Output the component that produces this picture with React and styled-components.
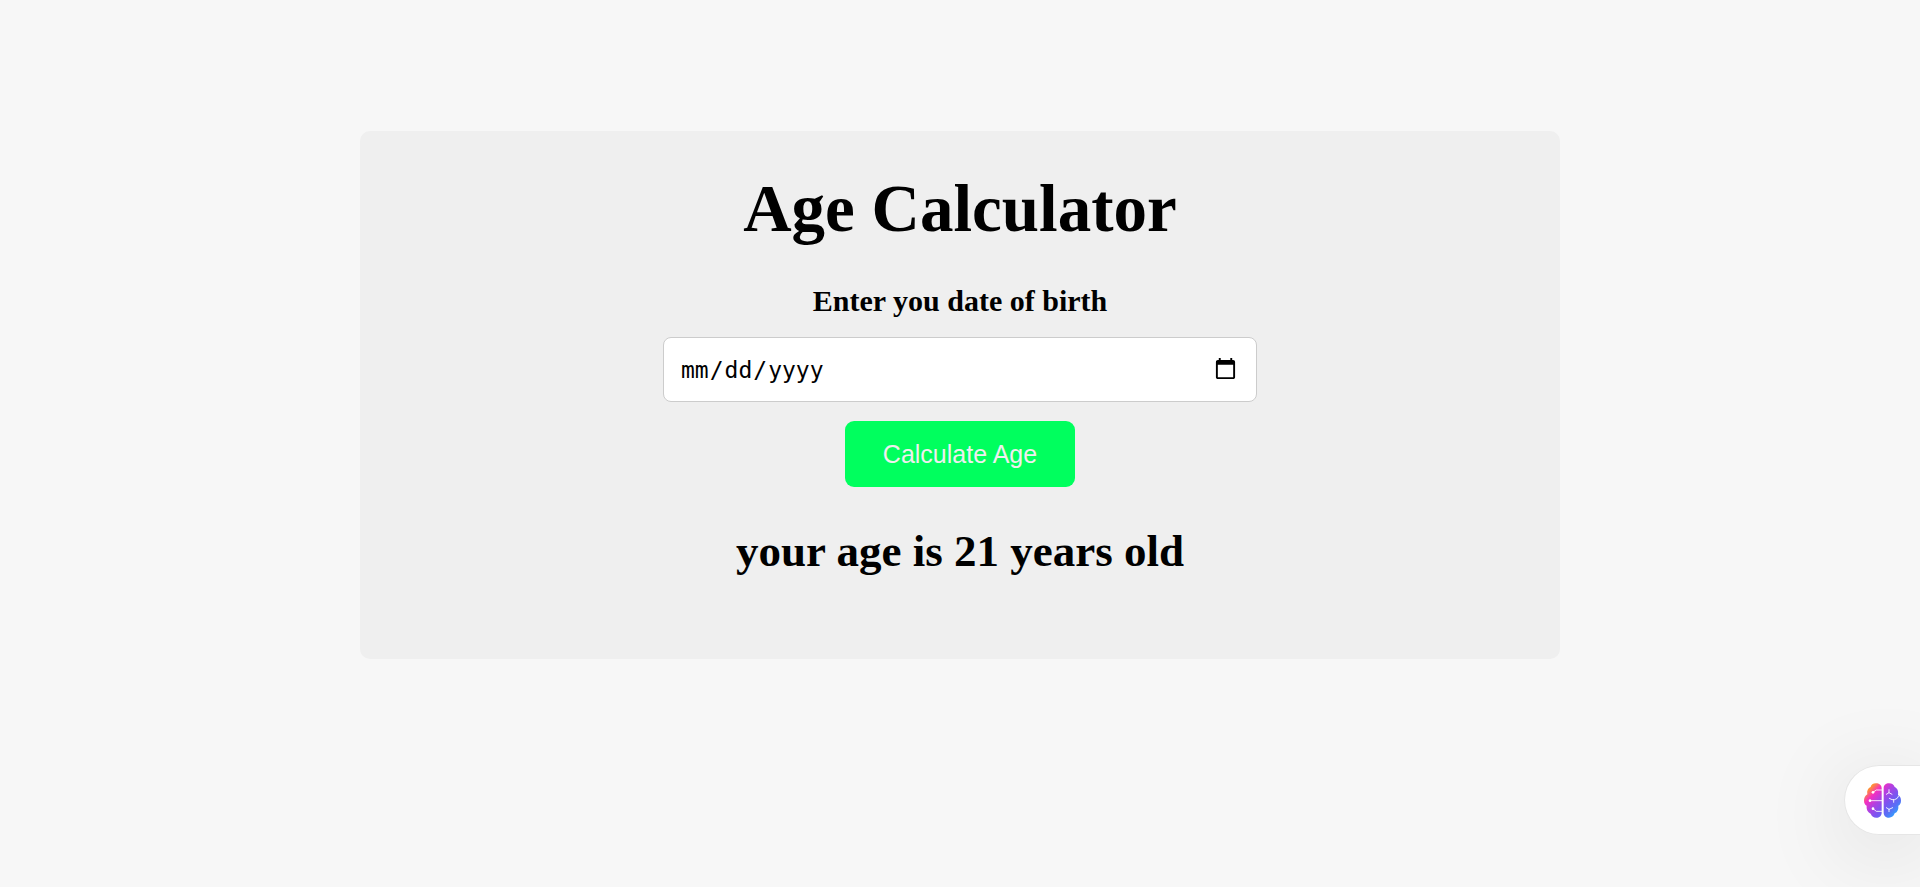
import React, { useState } from "react";
import styled, { createGlobalStyle } from "styled-components";

const GlobalStyle = createGlobalStyle`
  *, *::before, *::after { box-sizing: border-box; }
  body {
    margin: 0;
    background: #f7f7f7;
    color: #000;
    font-family: "Liberation Serif", "Times New Roman", serif;
  }
`;

const Page = styled.main`
  display: flex;
  justify-content: center;
  padding: 131px 24px 48px;
`;

const Card = styled.form`
  display: flex;
  flex-direction: column;
  align-items: center;
  width: 100%;
  max-width: 1200px;
  padding: 38px 24px 82px;
  border-radius: 10px;
  background: #efefef;
  text-align: center;
`;

const Title = styled.h1`
  margin: 0 0 37px;
  font-size: 67px;
  line-height: 78px;
`;

const Label = styled.label`
  margin-bottom: 19px;
  font-size: 30px;
  font-weight: bold;
  line-height: 34px;
`;

const DateInput = styled.input`
  width: 100%;
  max-width: 594px;
  height: 65px;
  margin-bottom: 19px;
  padding: 0 16px;
  border: 1px solid #ccc;
  border-radius: 8px;
  background: #fff;
  color: #000;
  font-family: "DejaVu Sans Mono", monospace;
  font-size: 23px;

  &::-webkit-calendar-picker-indicator {
    width: 25px;
    height: 25px;
  }
`;

const SubmitButton = styled.button`
  height: 66px;
  margin-bottom: 38px;
  padding: 0 38px;
  border: 0;
  border-radius: 9px;
  background: #00ff5e;
  color: #efefef;
  font-family: "Liberation Sans", Arial, sans-serif;
  font-size: 25px;
  line-height: 28px;
  cursor: pointer;
`;

const Result = styled.output`
  font-size: 45px;
  font-weight: bold;
  line-height: 52px;
`;

const AssistantButton = styled.button`
  position: fixed;
  right: 0;
  bottom: 52px;
  display: flex;
  align-items: center;
  width: 76px;
  height: 70px;
  padding: 0 0 0 19px;
  border: 1px solid #e6e6e6;
  border-right: 0;
  border-radius: 35px 0 0 35px;
  background: #fff;
  box-shadow: 0 15px 90px rgba(0, 0, 0, 0.13);
  cursor: pointer;
`;

function BrainIcon() {
  return (
    <svg width="37" height="35" viewBox="0 0 111 103" aria-hidden="true">
      <defs>
        <linearGradient id="brain" gradientUnits="userSpaceOnUse" x1="12" y1="8" x2="100" y2="92">
          <stop offset="0" stopColor="#ff9f1c" />
          <stop offset="0.08" stopColor="#ff8a3c" />
          <stop offset="0.24" stopColor="#f52fc0" />
          <stop offset="0.42" stopColor="#b43fe0" />
          <stop offset="0.64" stopColor="#7a55f0" />
          <stop offset="0.82" stopColor="#5870f6" />
          <stop offset="1" stopColor="#2ba6ff" />
        </linearGradient>
      </defs>
      <g fill="url(#brain)">
        <path d="M53 15C53 5 45 0 36 0C27 0 21 5 20 11C12 14 8 22 10 33C3 37 0 44 0 52C0 59 3 64 8 67C7 77 10 86 20 91C23 99 29 103 37 103C46 103 53 97 53 88Z" />
        <path d="M59 15C59 5 66 0 75 0C84 0 90 5 92 11C100 15 104 22 102 35C108 38 111 44 111 52C111 59 108 64 103 67C104 77 101 86 92 90C89 99 83 103 75 103C66 103 59 97 59 88Z" />
      </g>
      <g fill="none" stroke="#fff" strokeOpacity="0.85" strokeWidth="3" strokeLinecap="round" strokeLinejoin="round">
        <path d="M27 27L37 20H53M18 52H53M27 76L37 84H53" />
        <path d="M75 19V28L67 33M75 28L84 33" />
        <path d="M76 45L84 49H92Q101 47 104 38M89 49V57" />
        <path d="M67 73L75 78L86 73M75 78V85" />
      </g>
      <g fill="#fff">
        <circle cx="27" cy="27" r="4" />
        <circle cx="18" cy="52" r="4" />
        <circle cx="27" cy="76" r="4" />
      </g>
    </svg>
  );
}

function ageOn(today, birthday) {
  const [year, month, day] = birthday.split("-").map(Number);
  const m = today.getMonth() + 1;
  const passed = m > month || (m === month && today.getDate() >= day);
  return today.getFullYear() - year - (passed ? 0 : 1);
}

export default function App() {
  const [birthday, setBirthday] = useState("");
  const [age, setAge] = useState(21);

  const calculate = (event) => {
    event.preventDefault();
    if (birthday) setAge(ageOn(new Date(), birthday));
  };

  return (
    <>
      <GlobalStyle />
      <Page>
        <Card onSubmit={calculate}>
          <Title>Age Calculator</Title>
          <Label htmlFor="birthday">Enter you date of birth</Label>
          <DateInput
            id="birthday"
            type="date"
            value={birthday}
            onChange={(event) => setBirthday(event.target.value)}
          />
          <SubmitButton type="submit">Calculate Age</SubmitButton>
          <Result htmlFor="birthday">your age is {age} years old</Result>
        </Card>
      </Page>
      <AssistantButton type="button" aria-label="Open assistant">
        <BrainIcon />
      </AssistantButton>
    </>
  );
}
